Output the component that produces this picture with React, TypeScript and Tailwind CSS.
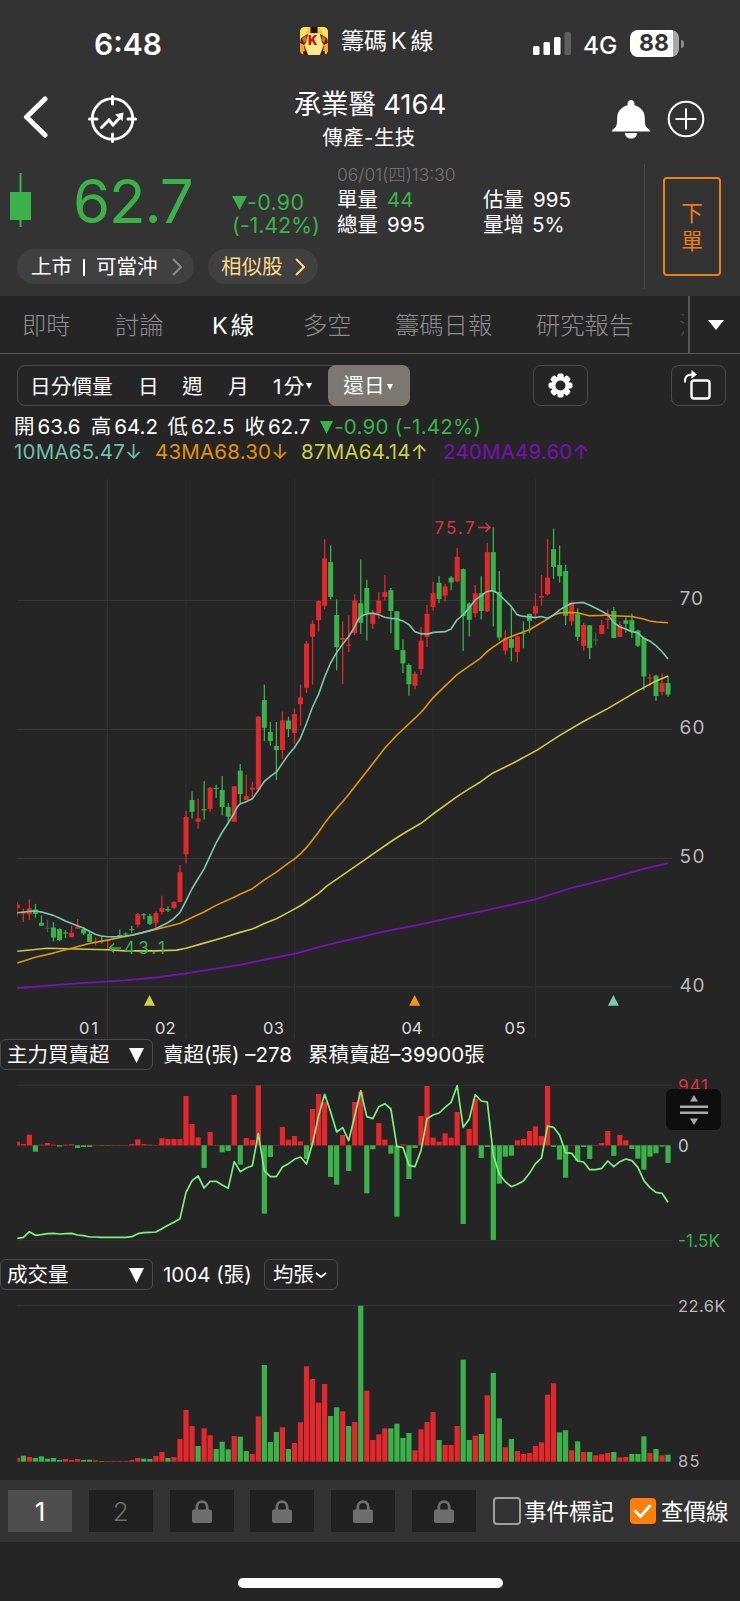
import type { ReactNode } from 'react';

type Side = 'r' | 'g' | 'n';
type Candle = [Side, number, number, number, number];

const RED = '#e3272c';
const GREEN = '#3bb14a';
const NEUTRAL = '#555555';

const COLORS: Record<Side, string> = { r: RED, g: GREEN, n: NEUTRAL };

// side, high, body top, body bottom, low (chart units, 2.7034 per pixel)
const CANDLES: Candle[] = [
  ['r', 1168, 1175, 1185, 1208], ['r', 1185, 1197, 1199, 1222], ['r', 1161, 1185, 1201, 1217],
  ['g', 1173, 1188, 1200, 1210], ['g', 1204, 1224, 1232, 1232], ['n', 1216, 1237, 1239, 1250],
  ['g', 1222, 1237, 1264, 1275], ['g', 1239, 1241, 1271, 1273], ['g', 1244, 1250, 1253, 1265],
  ['r', 1233, 1251, 1263, 1263], ['r', 1214, 1236, 1240, 1240], ['g', 1235, 1241, 1253, 1257],
  ['g', 1245, 1254, 1276, 1276], ['r', 1263, 1275, 1277, 1285], ['g', 1260, 1272, 1274, 1280],
  ['r', 1268, 1271, 1273, 1298], ['n', 1260, 1264, 1266, 1270], ['g', 1242, 1257, 1259, 1264],
  ['g', 1250, 1253, 1255, 1262], ['g', 1232, 1241, 1243, 1252], ['r', 1198, 1201, 1229, 1237],
  ['g', 1198, 1201, 1203, 1215], ['g', 1200, 1206, 1227, 1230], ['r', 1192, 1198, 1224, 1245],
  ['r', 1151, 1184, 1195, 1202], ['g', 1180, 1187, 1191, 1195], ['r', 1165, 1168, 1184, 1187],
  ['r', 1068, 1087, 1168, 1168], ['r', 922, 938, 1039, 1064], ['g', 869, 892, 924, 942],
  ['r', 888, 942, 951, 970], ['g', 841, 917, 920, 945], ['r', 857, 859, 916, 924],
  ['g', 851, 860, 862, 887], ['g', 827, 865, 911, 934], ['g', 900, 911, 937, 950],
  ['r', 854, 855, 951, 951], ['g', 795, 813, 876, 900], ['r', 824, 881, 892, 893],
  ['r', 843, 859, 864, 893], ['r', 665, 667, 864, 870], ['g', 580, 622, 697, 733],
  ['g', 681, 708, 733, 745], ['g', 681, 746, 757, 838], ['r', 653, 677, 757, 781],
  ['g', 667, 677, 700, 722], ['r', 645, 660, 711, 741], ['r', 580, 615, 633, 691],
  ['r', 462, 469, 589, 603], ['r', 406, 416, 451, 580], ['r', 352, 354, 406, 437],
  ['r', 187, 239, 367, 377], ['g', 204, 249, 343, 350], ['g', 350, 392, 479, 542],
  ['r', 409, 454, 459, 579], ['r', 393, 472, 475, 492], ['r', 336, 353, 441, 446],
  ['g', 242, 360, 413, 443], ['g', 297, 319, 388, 461], ['r', 378, 390, 416, 430],
  ['r', 330, 353, 387, 402], ['r', 284, 330, 343, 353], ['g', 319, 325, 381, 441],
  ['g', 381, 382, 486, 486], ['g', 458, 487, 523, 549], ['g', 523, 527, 579, 610],
  ['r', 545, 551, 583, 593], ['r', 424, 461, 538, 554], ['r', 365, 389, 451, 479],
  ['r', 302, 333, 370, 380], ['g', 287, 305, 349, 360], ['r', 308, 315, 340, 355],
  ['g', 287, 291, 304, 325], ['r', 211, 235, 301, 304], ['g', 266, 268, 395, 489],
  ['g', 358, 361, 405, 450], ['r', 311, 333, 387, 398], ['g', 287, 333, 381, 404],
  ['r', 197, 222, 382, 384], ['g', 155, 222, 330, 423], ['g', 273, 330, 453, 461],
  ['r', 433, 454, 488, 499], ['g', 371, 457, 481, 517], ['r', 448, 450, 492, 520],
  ['g', 409, 440, 442, 482], ['g', 388, 389, 408, 440], ['r', 334, 368, 388, 399],
  ['r', 284, 341, 345, 367], ['r', 187, 291, 336, 340], ['g', 158, 214, 262, 294],
  ['g', 204, 257, 287, 304], ['g', 256, 273, 394, 419], ['r', 356, 358, 409, 421],
  ['g', 374, 390, 451, 462], ['r', 413, 419, 476, 488], ['g', 419, 420, 481, 511],
  ['n', 440, 458, 461, 474], ['r', 405, 419, 443, 444], ['r', 377, 402, 405, 430],
  ['g', 370, 381, 454, 455], ['r', 409, 419, 451, 452], ['g', 398, 406, 416, 440],
  ['g', 388, 406, 437, 454], ['g', 432, 434, 475, 479], ['g', 450, 455, 558, 596],
  ['r', 552, 561, 563, 586], ['g', 554, 556, 611, 624], ['r', 549, 576, 600, 610],
  ['g', 556, 576, 607, 613],
];

const MA10 = [
  52, 1197, 80, 1194, 106, 1192, 130, 1196, 160, 1204, 178, 1211, 196, 1219, 232, 1232, 250, 1238, 268, 1247,
  286, 1255, 304, 1260, 322, 1262, 350, 1262, 376, 1260, 400, 1257, 430, 1250, 467, 1240, 503, 1224, 521, 1213,
  539, 1197, 558, 1165, 576, 1132, 594, 1105, 612, 1079, 630, 1044, 648, 1009, 666, 980, 684, 955, 702, 929,
  711, 912, 720, 903, 740, 896, 757, 889, 775, 866, 793, 842, 811, 828, 829, 817, 847, 793, 865, 770,
  883, 751, 901, 726, 919, 686, 937, 642, 955, 608, 973, 562, 991, 523, 1009, 495, 1027, 472, 1046, 450,
  1064, 424, 1075, 403, 1085, 394, 1100, 389, 1118, 387, 1136, 391, 1154, 398, 1172, 401, 1190, 402, 1208, 408,
  1227, 418, 1245, 437, 1263, 443, 1285, 443, 1300, 439, 1335, 437, 1353, 430, 1371, 405, 1389, 392, 1407, 373,
  1425, 352, 1443, 340, 1460, 329, 1476, 326, 1490, 331, 1506, 344, 1533, 368, 1551, 391, 1565, 395, 1588, 397,
  1606, 399, 1624, 396, 1642, 401, 1660, 393, 1678, 379, 1696, 369, 1714, 361, 1732, 359, 1750, 358, 1768, 365,
  1800, 379, 1823, 391, 1841, 412, 1859, 424, 1877, 430, 1895, 437, 1913, 440, 1931, 455, 1949, 462, 1967, 474,
  1985, 490, 2004, 511,
];

const MA43 = [
  52, 1333, 106, 1317, 160, 1306, 214, 1293, 268, 1280, 322, 1271, 376, 1261, 430, 1250, 485, 1238, 539, 1226,
  576, 1210, 612, 1195, 648, 1177, 702, 1155, 720, 1147, 757, 1132, 793, 1108, 829, 1087, 865, 1063, 883, 1052,
  901, 1038, 919, 1021, 955, 980, 973, 956, 991, 935, 1040, 884, 1064, 856, 1120, 792, 1154, 752, 1190, 717,
  1245, 671, 1270, 648, 1299, 616, 1320, 597, 1371, 553, 1407, 530, 1440, 510, 1460, 492, 1479, 479, 1515, 457,
  1551, 444, 1588, 432, 1624, 413, 1642, 403, 1660, 392, 1678, 387, 1696, 385, 1732, 386, 1768, 394, 1804, 393,
  1823, 392, 1841, 394, 1895, 396, 1931, 403, 1949, 408, 1970, 411, 2004, 413,
];

const MA87 = [
  52, 1301, 142, 1293, 232, 1295, 322, 1297, 376, 1300, 467, 1300, 530, 1298, 558, 1293, 612, 1279, 666, 1265,
  720, 1250, 757, 1241, 793, 1226, 829, 1213, 865, 1196, 901, 1178, 955, 1145, 980, 1125, 1030, 1094, 1100, 1050,
  1172, 1005, 1208, 984, 1263, 955, 1299, 930, 1371, 883, 1407, 862, 1440, 844, 1479, 819, 1540, 792, 1610, 758,
  1678, 718, 1750, 680, 1823, 645, 1913, 597, 1960, 574, 2004, 557,
];

const MA240 = [
  52, 1401, 142, 1394, 232, 1388, 376, 1380, 467, 1372, 558, 1361, 648, 1348, 720, 1338, 793, 1324, 883, 1308,
  973, 1286, 1027, 1274, 1154, 1247, 1245, 1232, 1299, 1221, 1371, 1207, 1440, 1194, 1515, 1179, 1606, 1161,
  1714, 1130, 1760, 1120, 1841, 1101, 1931, 1078, 2004, 1063,
];

// bar ends of the net buy / sell panel, zero line sits at 346 (3 units per pixel)
const NET = [
  335, 342, 314, 365, 344, 339, 344, 350, 344, 343, 354, 351, 351, 345, 347, 347, 345, 345, 345, 342,
  328, 342, 344, 345, 325, 327, 327, 327, 198, 282, 322, 414, 306, 345, 367, 363, 195, 404, 324, 330,
  166, 551, 381, 345, 291, 329, 318, 334, 387, 237, 192, 217, 441, 464, 315, 423, 216, 185, 490, 358,
  279, 329, 371, 560, 343, 447, 354, 258, 168, 323, 335, 310, 323, 246, 582, 297, 207, 384, 351, 630,
  461, 380, 377, 331, 327, 303, 289, 318, 168, 351, 389, 443, 345, 392, 351, 387, 345, 339, 303, 378,
  315, 331, 357, 386, 419, 380, 370, 350, 399,
];

const NET_LINE = [
  625, 622, 605, 616, 614, 611, 610, 612, 611, 610, 615, 617, 621, 621, 622, 622, 622, 622, 622, 620,
  611, 608, 607, 606, 596, 586, 577, 566, 487, 452, 438, 474, 454, 454, 465, 475, 395, 425, 414, 407,
  311, 422, 440, 440, 411, 401, 388, 381, 402, 340, 258, 193, 245, 306, 293, 332, 258, 182, 260, 266,
  230, 221, 237, 350, 352, 406, 410, 362, 266, 255, 249, 232, 217, 167, 292, 268, 194, 213, 216, 375,
  433, 455, 470, 463, 453, 430, 401, 384, 288, 292, 315, 368, 370, 393, 396, 419, 419, 415, 393, 410,
  395, 387, 392, 412, 452, 473, 487, 490, 517,
];

const VOLUME = [
  564, 557, 561, 564, 559, 566, 564, 570, 567, 570, 567, 570, 569, 571, 573, 573, 573, 573, 573, 570,
  564, 566, 567, 558, 546, 564, 561, 507, 420, 468, 528, 475, 496, 537, 515, 538, 498, 500, 543, 552,
  439, 285, 516, 486, 472, 537, 519, 457, 289, 327, 398, 342, 438, 412, 424, 468, 456, 107, 362, 510,
  493, 475, 475, 461, 504, 489, 541, 478, 456, 426, 510, 525, 525, 468, 269, 510, 497, 492, 376, 309,
  445, 532, 507, 543, 552, 549, 528, 517, 374, 340, 487, 481, 541, 514, 546, 546, 556, 553, 549, 546,
  562, 561, 552, 552, 499, 549, 537, 556, 554,
];

const VOLUME_SIDES =
  'rgrgggggrrrggrgrrrrrrggrrgrrrrgrrgggrggrrgggrgrrrrrrggrgrgrrrrggggrrrrgrrrggrgrggrgrrrrrrrggrgrgrrrgrrgggrgrg';

const xAt = (i: number) => 17.33 + i * 6.025;
const py = (v: number) => v / 2.7034;

function toPoints(flat: number[]) {
  const out: string[] = [];
  for (let i = 0; i < flat.length; i += 2) {
    out.push(`${(flat[i] / 3).toFixed(2)},${py(flat[i + 1]).toFixed(2)}`);
  }
  return out.join(' ');
}

function PriceChart() {
  return (
    <svg className="block h-[569px] w-full" viewBox="0 0 740 569" fontFamily="Inter, sans-serif">
      <clipPath id="plot">
        <rect x="17.3" y="0" width="655" height="569" />
      </clipPath>
      <g stroke="#373737" strokeWidth="1">
        {[353, 701.5, 1050, 1397.5].map((v) => (
          <line key={v} x1="17" x2="672" y1={py(v)} y2={py(v)} />
        ))}
        {[107.4, 186, 294.4, 433, 535.4].map((x) => (
          <line key={x} x1={x} x2={x} y1="9" y2="568" stroke="#313131" />
        ))}
      </g>
      <g clipPath="url(#plot)">
        {CANDLES.map(([side, high, top, bottom, low], i) => (
          <g key={i} fill={COLORS[side]}>
            <rect x={xAt(i) - 0.65} y={py(high)} width="1.3" height={py(low - high)} />
            <rect x={xAt(i) - 2.5} y={py(top)} width="5" height={Math.max(1, py(bottom - top))} />
          </g>
        ))}
      </g>
      <g fill="none" strokeWidth="1.6" strokeLinejoin="round">
        <polyline points={toPoints(MA240)} stroke="#7a10b4" strokeWidth="1.8" />
        <polyline points={toPoints(MA87)} stroke="#c9cc4a" />
        <polyline points={toPoints(MA43)} stroke="#e0960f" />
        <polyline points={toPoints(MA10)} stroke="#7cc8ae" />
      </g>
      <g fontSize="17">
        <text x="434.5" y="63.5" fill="#d9343a" textLength="40">75.7</text>
        <text x="124" y="483.5" fill={GREEN} textLength="41">43.1</text>
      </g>
      <path d="M478 57.4h12M485.5 53l4.500 4.400-4.500 4.400" fill="none" stroke="#d9343a" strokeWidth="1.5" />
      <path d="M121 478h-11.500M114 473.500l-4.500 4.500 4.500 4.500" fill="none" stroke={GREEN} strokeWidth="1.5" />
      <g fill="#b8b8b8" fontSize="19">
        <text x="679.5" y="135" textLength="23.5">70</text>
        <text x="679.5" y="264" textLength="25">60</text>
        <text x="679.5" y="393" textLength="25">50</text>
        <text x="679.5" y="521.5" textLength="25">40</text>
      </g>
      <g fill="#dddddd" fontSize="16.5">
        <text x="79" y="564" textLength="19">01</text>
        <text x="155" y="564" textLength="20.5">02</text>
        <text x="263" y="564" textLength="21">03</text>
        <text x="401.5" y="564" textLength="21">04</text>
        <text x="504.5" y="564" textLength="21">05</text>
      </g>
      <path d="M149.5 525l5.500 10.800h-11z" fill="#d3cf3e" />
      <path d="M414.7 525l5.500 10.800h-11z" fill="#ec9a0c" />
      <path d="M613.4 525l5.500 10.800h-11z" fill="#7cc8ae" />
    </svg>
  );
}

function NetChart() {
  const line = NET_LINE.map((v, i) => `${xAt(i).toFixed(2)},${(v / 3 - 40).toFixed(2)}`).join(' ');
  return (
    <svg className="block h-[189px] w-full" viewBox="0 0 740 189" fontFamily="Inter, sans-serif" fontSize="17">
      <path d="M17 15.200h656M17 170.700h656" stroke="#323232" strokeWidth="1" />
      <path d="M17 75.300h651" stroke="#5c2a2c" strokeWidth="0.8" />
      {NET.map((v, i) => {
        const up = v < 346;
        const x = Math.max(17.3, xAt(i) - 2.6);
        return (
          <rect
            key={i}
            x={x}
            y={up ? v / 3 - 40 : 75.3}
            width={xAt(i) + 2.6 - x}
            height={Math.abs(v - 346) / 3}
            fill={up ? RED : GREEN}
          />
        );
      })}
      <polyline points={line} fill="none" stroke="#7bf07f" strokeWidth="1.7" strokeLinejoin="round" />
      <text x="678" y="21.5" fill="#d9343a" textLength="30">941</text>
      <text x="678" y="81.5" fill="#c4c4c4">0</text>
      <text x="678" y="176.5" fill={GREEN} textLength="42">-1.5K</text>
    </svg>
  );
}

function VolumeChart() {
  return (
    <svg className="block h-[190px] w-full" viewBox="0 0 740 190" fontFamily="Inter, sans-serif" fontSize="16.5">
      <path d="M17 15.700h656" stroke="#373737" strokeWidth="1" />
      {VOLUME.map((v, i) => {
        const x = Math.max(17.3, xAt(i) - 2.6);
        return (
          <rect
            key={i}
            x={x}
            y={v / 3 - 20}
            width={xAt(i) + 2.6 - x}
            height={(575 - v) / 3}
            fill={COLORS[VOLUME_SIDES[i] as Side]}
          />
        );
      })}
      <text x="678" y="22" fill="#b8b8b8" textLength="47.5">22.6K</text>
      <text x="678" y="177" fill="#b8b8b8" textLength="21.5">85</text>
    </svg>
  );
}

function AppLogo() {
  return (
    <svg className="h-7 w-7" viewBox="0 0 28 28">
      <clipPath id="logo">
        <rect width="28" height="28" rx="5" />
      </clipPath>
      <g clipPath="url(#logo)">
        <rect width="28" height="28" fill="#f3c53d" />
        <path d="M0 0h9L5 9 0 12zM28 0h-8l4 9 4 3z" fill="#fbe063" />
        <path d="M1 11l7-4 3 2-4 5-3 4-4-2zM27 11l-7-4-3 2 4 5 3 4 4-2z" fill="#5a2410" />
        <path d="M2 11l4-2 1 4-3 3zM26 11l-4-2-1 4 3 3z" fill="#d9682c" />
        <path d="M8 7h12l2.500 12-3 9H9l-3.500-9z" fill="#fbe98c" />
        <path d="M10.500 0h7v6h-7z" fill="#1b1205" />
        <path d="M4 18l4 10H3zM24 18l-4 10h5z" fill="#40160c" />
        <path d="M0 17l4 2 1 5-5 1zM28 17l-4 2-1 5 5 1z" fill="#f0a62f" />
        <text x="12.8" y="18" textAnchor="middle" fontFamily="Inter, sans-serif" fontWeight="900" fontSize="12.5" fill="#c8151b">
          K
        </text>
      </g>
    </svg>
  );
}

function StatusBar() {
  return (
    <div className="flex h-[84px] items-start pt-[26px]">
      <div className="ml-[94px] mt-[3px] h-[30px] w-[206px] text-[30px] leading-[30px] font-semibold">6:48</div>
      <div className="mt-px">
        <AppLogo />
      </div>
      <div className="ml-[13px] mt-px flex h-7 w-[192px] items-center gap-[4px] text-[23px]">
        <span>籌碼</span>
        <span>K</span>
        <span>線</span>
      </div>
      <svg className="mt-[6px] h-[23px] w-[38px]" viewBox="0 0 38 23">
        <rect x="0" y="14" width="6.500" height="9" rx="1.500" fill="#fff" />
        <rect x="10.500" y="10" width="6.500" height="13" rx="1.500" fill="#fff" />
        <rect x="21" y="5" width="6.500" height="18" rx="1.500" fill="#fff" />
        <rect x="31.500" y="0" width="6.500" height="23" rx="1.500" fill="#5f5f5f" />
      </svg>
      <div className="ml-[12px] mt-[6px] w-[47px] text-[24.5px] leading-[26px] font-medium">4G</div>
      <div className="mt-[4px] flex items-center">
        <div className="flex h-[27px] w-[49px] items-center justify-center rounded-[8px] bg-linear-to-r from-white from-88% to-[#a8a8a8] to-88% pr-px text-[23px] leading-none font-bold text-[#333]">
          88
        </div>
        <div className="ml-[2px] h-[8px] w-[3px] rounded-r-full bg-[#8a8a8a]" />
      </div>
    </div>
  );
}

function TitleBar() {
  return (
    <div className="flex h-[76px] items-start">
      <svg className="ml-[23px] mt-[12px] h-[42px] w-[25px]" viewBox="0 0 25 42" fill="none" stroke="#fff" strokeWidth="5">
        <path d="M22 3L3.500 21 22 39" strokeLinejoin="round" strokeLinecap="round" />
      </svg>
      <svg className="ml-[39px] mt-[11px] h-[50px] w-[50px]" viewBox="0 0 50 50" fill="none" stroke="#fff" strokeWidth="3">
        <circle cx="25.500" cy="24" r="20.300" strokeWidth="2.800" />
        <path d="M25.500 1.500v7.500M25.500 39v7.500M2.500 24H10M41 24h7.500" strokeLinecap="round" />
        <path d="M14.500 32.500l7.500-7.500 4 5 7.500-8" strokeLinecap="round" />
        <path d="M28 19.500l8.500-2-1 8.500z" fill="#fff" stroke="none" />
      </svg>
      <div className="ml-[82px] mt-px flex w-[300px] flex-col items-center">
        <div className="flex h-10 items-center gap-[7px] pl-[2px] text-[27.5px] whitespace-nowrap">
          <span>承業醫</span>
          <span>4164</span>
        </div>
        <div className="flex h-[26px] items-center text-[20.5px] tracking-[0.4px] whitespace-nowrap">傳產-生技</div>
      </div>
      <svg className="ml-[93px] mt-[16px] h-[39px] w-[38px]" viewBox="0 0 38 39" fill="#fff">
        <path d="M19 0c2 0 3.400 1.400 3.400 3.400v1.800C29 7 32.800 11.500 32.800 18c0 8 .9 9 5.200 12.200v1.300H0v-1.300C4.300 27 5.200 26 5.200 18 5.200 11.500 9 7 15.600 5.200V3.400C15.600 1.400 17 0 19 0z" />
        <path d="M13 33h12c0 3.500-2.500 5.500-6 5.500S13 36.500 13 33z" />
      </svg>
      <svg className="ml-[17px] mt-[16px] h-[38px] w-[38px]" viewBox="0 0 38 38" fill="none" stroke="#fff" strokeWidth="2">
        <circle cx="19" cy="19" r="17.300" />
        <path d="M19 8.500v21M8.500 19h21" />
      </svg>
    </div>
  );
}

function QuoteRow() {
  return (
    <div className="flex h-[136px]">
      <div className="flex w-[644px] flex-col">
        <div className="flex h-[89px]">
          <svg className="ml-[10px] mt-[12px] h-[56px] w-[22px]" viewBox="0 0 22 56" fill={GREEN}>
            <rect x="9.500" y="1" width="2" height="54" />
            <rect x="0" y="20" width="21" height="28" />
          </svg>
          <div className="ml-[41px] mt-[11px] w-[159px] text-[60px] leading-[60px] tracking-[-1.2px] text-[#3bb14a]">62.7</div>
          <div className="mt-[31px] w-[105px] text-[21.5px] leading-[23px] text-[#3bb14a]">
            <div className="flex items-center">
              <Triangle className="h-[14px] w-[15px]" />
              <span className="tracking-[0.3px]">-0.90</span>
            </div>
            <div className="tracking-[-0.1px]">(-1.42%)</div>
          </div>
          <div className="w-[146px] pt-[4px]">
            <div className="flex h-[23px] items-center text-[17.5px] font-light whitespace-nowrap text-[#757575]">
              06/01(四)13:30
            </div>
            <div className="mt-px flex h-[25px] items-center gap-[9px] text-[20.5px]">
              單量<span className="text-[#3bb14a]">44</span>
            </div>
            <div className="flex h-[24px] items-center gap-[9px] text-[20.5px]">
              總量<span>995</span>
            </div>
          </div>
          <div className="pt-[28px] whitespace-nowrap">
            <div className="flex h-[25px] items-center gap-[9px] text-[20.5px]">
              估量<span>995</span>
            </div>
            <div className="flex h-[24px] items-center gap-[8px] text-[20.5px]">
              量增<span>5%</span>
            </div>
          </div>
        </div>
        <div className="flex gap-[14px] pl-[17px]">
          <div className="flex h-[35px] w-[177px] items-center rounded-full bg-[#404040] pt-px pl-[14px] text-[20.5px]">
            上市
            <span className="mx-[11px] h-[17px] w-[2px] bg-white" />
            可當沖
            <Chevron className="ml-[14px] text-[#8a8a8a]" />
          </div>
          <div className="flex h-[35px] w-[110px] items-center rounded-full bg-[#404040] pt-px pl-[13px] text-[20.5px] text-[#fbd98a]">
            相似股
            <Chevron className="ml-[12px]" />
          </div>
        </div>
      </div>
      <div className="mt-[4px] h-[125px] w-px bg-[#484848]" />
      <div className="ml-[18px] mt-[17px] flex h-[99px] w-[58px] flex-col items-center justify-center rounded-[4px] border-2 border-[#e8811a] text-[21.5px] leading-[28px] text-[#f07c14]">
        <span>下</span>
        <span>單</span>
      </div>
    </div>
  );
}

function Triangle({ className }: { className?: string }) {
  return (
    <svg className={className} viewBox="0 0 16 16" preserveAspectRatio="none" fill="currentColor">
      <path d="M0 0h16L8 16z" />
    </svg>
  );
}

function Chevron({ className }: { className?: string }) {
  return (
    <svg className={`h-[18px] w-[10px] ${className}`} viewBox="0 0 10 18" fill="none" stroke="currentColor" strokeWidth="2">
      <path d="M1 1l8 8-8 8" />
    </svg>
  );
}

const TABS = [
  { label: '即時', box: 'w-[93px]' },
  { label: '討論', box: 'w-[97px]' },
  { label: 'K 線', box: 'w-[91px]', active: true },
  { label: '多空', box: 'w-[92px]' },
  { label: '籌碼日報', box: 'w-[141px]' },
  { label: '研究報告', box: 'w-[143px]' },
];

function Tabs() {
  return (
    <div className="flex h-[58px] border-b-[1.5px] border-[#565656]">
      <div className="flex w-[688px] items-center overflow-hidden pt-[2px] pl-[22px] text-[24.3px] text-[#8c8c8c]">
        {TABS.map((t) => (
          <div
            key={t.label}
            className={`shrink-0 whitespace-nowrap ${t.box} ${t.active ? 'text-[23.5px] text-white' : 'font-light'}`}
          >
            {t.active ? (
              <span className="flex gap-[3px]">
                <span>K</span>
                <span>線</span>
              </span>
            ) : (
              t.label
            )}
          </div>
        ))}
        <div className="w-[5px] overflow-hidden font-light whitespace-nowrap text-[#4c4c4c]">法</div>
      </div>
      <div className="flex w-[52px] items-center border-l-2 border-[#565656] pl-[18px]">
        <Triangle className="h-[10px] w-[16px]" />
      </div>
    </div>
  );
}

function IconButton({ children }: { children: ReactNode }) {
  return (
    <div className="flex h-[41px] w-[55px] items-center justify-center rounded-[8px] border-[1.5px] border-[#494949]">
      {children}
    </div>
  );
}

function Toolbar() {
  return (
    <div className="flex pt-[11px] pl-[17px]">
      <div className="relative flex h-[41px] w-[393px] items-center rounded-[8px] border-[1.5px] border-[#4b4b4b] pt-[2px] pl-[12px] text-[20.7px] whitespace-nowrap">
        <span className="w-[108px]">日分價量</span>
        <span className="w-[44px]">日</span>
        <span className="w-[46px]">週</span>
        <span className="w-[45px]">月</span>
        <span className="flex w-[54px] items-center">
          <span className="mr-[2px]">1</span>分<Triangle className="ml-[2px] h-[6px] w-[6px]" />
        </span>
        <span className="absolute -top-px -right-px flex h-[41px] w-[82px] items-center justify-center rounded-[8px] bg-[#7d7771] pt-px pr-[2px]">
          還日<Triangle className="ml-[2px] mt-px h-[6px] w-[6px]" />
        </span>
      </div>
      <div className="ml-[123px]">
        <IconButton>
          <svg className="h-[25px] w-[25px]" viewBox="0 0 26 26">
            <g fill="#fff">
              {[0, 45, 90, 135].map((a) => (
                <rect key={a} x="9.800" y="0.600" width="6.400" height="24.800" rx="1.800" transform={`rotate(${a} 13 13)`} />
              ))}
              <circle cx="13" cy="13" r="9.600" />
            </g>
            <circle cx="13" cy="13" r="5.200" fill="#252525" />
          </svg>
        </IconButton>
      </div>
      <div className="ml-[83px]">
        <IconButton>
          <svg className="mr-[3px] mb-[2px] h-[30px] w-[28px]" viewBox="0 0 28 30" fill="none" stroke="#fff">
            <rect x="8.500" y="10.500" width="18" height="18" rx="2.500" strokeWidth="2.400" />
            <path d="M2 12.500C1.500 7 4 4.500 9 4.500" strokeWidth="2" />
            <path d="M8.500 0l5.500 4.500-5.500 4.300z" fill="#fff" stroke="none" />
          </svg>
        </IconButton>
      </div>
    </div>
  );
}

function Legend() {
  return (
    <div className="h-[64px] pt-[8px] pl-[14px] whitespace-nowrap">
      <div className="flex h-[26px] items-center text-[20.5px]">
        {[['開', '63.6'], ['高', '64.2'], ['低', '62.5'], ['收', '62.7']].map(([k, v]) => (
          <span key={k} className="flex w-[76.8px] items-center gap-[3px]">
            <span>{k}</span>
            <span>{v}</span>
          </span>
        ))}
        <span className="flex items-center text-[#3bb14a]">
          <Triangle className="ml-[-1px] h-[13px] w-[13px]" />
          <span className="ml-[1px] tracking-[0.25px]">-0.90 (-1.42%)</span>
        </span>
      </div>
      <div className="flex h-[25px] items-center text-[20.5px] tracking-[0.2px]">
        <span className="w-[141px] text-[#6fbfa6]">10MA65.47↓</span>
        <span className="w-[146px] text-[#e0920c]">43MA68.30↓</span>
        <span className="w-[142px] text-[#c9cc4a]">87MA64.14↑</span>
        <span className="text-[#7a10b4]">240MA49.60↑</span>
      </div>
    </div>
  );
}

function PanelSelect({ label }: { label: string }) {
  return (
    <div className="flex h-[31px] w-[153px] items-center justify-between rounded-[6px] border-[1.5px] border-[#4b4b4b] pt-px pr-[8px] pl-[6px] text-[20.5px]">
      {label}
      <Triangle className="h-[15px] w-[15px]" />
    </div>
  );
}

function LockIcon() {
  return (
    <svg className="h-[23px] w-[20px]" viewBox="0 0 20 23" fill="#6e6e6e">
      <rect x="0" y="9.500" width="20" height="13.500" rx="2" />
      <path d="M4.800 11V6.800a5.200 5.200 0 0 1 10.400 0V11" fill="none" stroke="#6e6e6e" strokeWidth="2.800" />
    </svg>
  );
}

function BottomBar() {
  return (
    <div className="flex h-[62px] items-center bg-[#333] pl-[8px] whitespace-nowrap">
      <div className="flex gap-[16.8px] text-[26px] text-[#6e6e6e]">
        <div className="flex h-[42px] w-[64px] items-center justify-center bg-[#4e4e4e] text-white">1</div>
        <div className="flex h-[42px] w-[64px] items-center justify-center bg-[#202020] font-light">2</div>
        {[3, 4, 5, 6].map((n) => (
          <div key={n} className="flex h-[42px] w-[64px] items-center justify-center bg-[#202020]">
            <LockIcon />
          </div>
        ))}
      </div>
      <div className="ml-[17px] h-[28px] w-[28px] rounded-[4px] border-2 border-[#a0a0a0]" />
      <span className="ml-[3px] w-[106px] pt-px text-[22.5px]">事件標記</span>
      <div className="flex h-[26px] w-[26px] items-center justify-center rounded-[4px] bg-[#ff7f0a]">
        <svg className="h-[16px] w-[19px]" viewBox="0 0 19 16" fill="none" stroke="#fff" strokeWidth="3">
          <path d="M1.500 7.500l6 6L17.500 2" />
        </svg>
      </div>
      <span className="ml-[5px] pt-px text-[22.5px]">查價線</span>
    </div>
  );
}

export default function App() {
  return (
    <div className="flex h-[1601px] w-[740px] flex-col overflow-hidden bg-[#252525] font-['Inter','Noto_Sans_CJK_TC',sans-serif] font-normal text-white">
      <header className="h-[296px] bg-[#333]">
        <StatusBar />
        <TitleBar />
        <QuoteRow />
      </header>
      <Tabs />
      <Toolbar />
      <Legend />
      <PriceChart />
      <div className="flex h-[31px] items-center text-[20.5px] whitespace-nowrap">
        <PanelSelect label="主力買賣超" />
        <span className="ml-[10px] w-[145px] pt-px">賣超(張) –278</span>
        <span className="pt-px">累積賣超–39900張</span>
      </div>
      <div className="relative h-[189px]">
        <NetChart />
        <div className="absolute top-[19px] left-[666px] flex h-[41px] w-[55px] items-center justify-center rounded-[6px] bg-[#0e0e0e]">
          <svg className="h-[30px] w-[28px]" viewBox="0 0 28 30" fill="#a9a9a9">
            <path d="M14 0l4 6.500h-8zM14 30l4-6.500h-8zM0 10.500h28v2.500H0zM0 16.500h28V19H0z" />
          </svg>
        </div>
      </div>
      <div className="flex h-[31px] items-center text-[20.5px] whitespace-nowrap">
        <PanelSelect label="成交量" />
        <span className="ml-[10px] w-[101px] pt-px">1004 (張)</span>
        <div className="flex h-[31px] w-[74px] items-center rounded-[6px] border-[1.5px] border-[#4b4b4b] pt-px pl-[8px]">
          均張
          <svg className="ml-[1px] h-[6px] w-[12px]" viewBox="0 0 12 6" fill="none" stroke="#fff" strokeWidth="1.800">
            <path d="M1 1l5 4 5-4" />
          </svg>
        </div>
      </div>
      <VolumeChart />
      <BottomBar />
      <div className="flex flex-1 justify-center pt-[36px]">
        <div className="h-[10px] w-[265px] rounded-full bg-white" />
      </div>
    </div>
  );
}
